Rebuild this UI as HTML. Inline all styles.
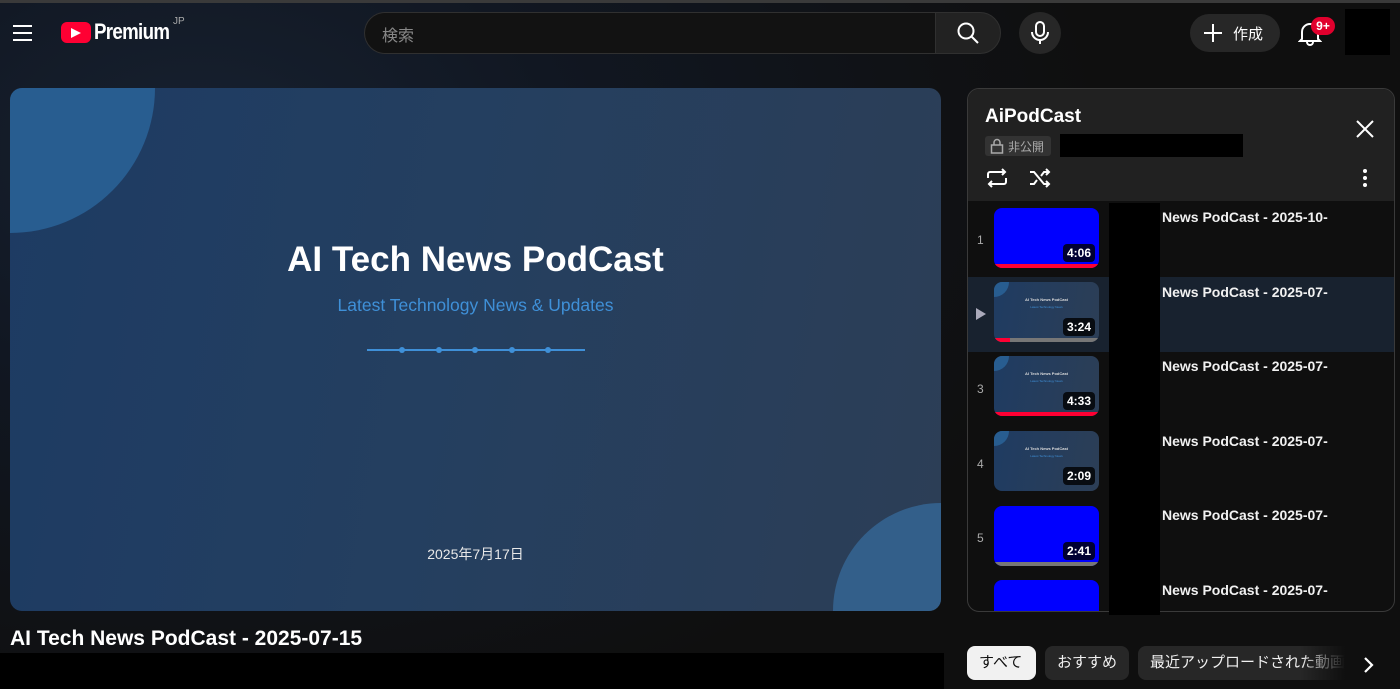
<!DOCTYPE html>
<html><head><meta charset="utf-8"><style>
*{margin:0;padding:0;box-sizing:border-box}
body{width:1400px;height:689px;overflow:hidden;background:#0f0f0f;font-family:"Liberation Sans","Noto Sans CJK JP",sans-serif;color:#fff;position:relative}
.bg{position:absolute;inset:0;background:radial-gradient(ellipse 900px 600px at 200px 150px,#172130 0%,#111722 40%,#0f0f0f 100%)}
.topline{position:absolute;left:0;top:0;width:1400px;height:3px;background:#3a3a3a}
.abs{position:absolute}
.video{left:10px;top:88px;width:931px;height:523px;border-radius:12px;overflow:hidden;background:linear-gradient(100deg,#1d3b63 0%,#243f60 45%,#2c3e56 100%)}
.thumb{position:absolute;left:994px;width:105px;height:60px;border-radius:8px;overflow:hidden}
.blue{background:#0000ff}
.mini{background:linear-gradient(100deg,#1f3c62,#2c3e56)}
.mt{position:absolute;left:0;width:105px;top:15px;text-align:center;font-size:4px;font-weight:bold;color:#ddd}
.ms{position:absolute;left:0;width:105px;top:23px;text-align:center;font-size:3px;color:#3f90d8}
.dur{position:absolute;right:4px;bottom:6px;background:rgba(0,0,0,.8);color:#fff;font-size:12px;font-weight:bold;padding:2px 4px;border-radius:4px}
.bar{position:absolute;left:0;bottom:0;height:4px;background:#ff0033}
.rt{position:absolute;left:1162px;font-size:14px;font-weight:bold;color:#f1f1f1}
.num{position:absolute;left:977px;font-size:12px;color:#aaa}
.chip{position:absolute;top:646px;height:34px;border-radius:8px;background:#272727;font-size:15px;line-height:34px;padding:0 12px;color:#f1f1f1}
</style></head><body>
<div class="bg"></div>
<div class="topline"></div>
<svg class="abs" style="left:12px;top:24px" width="22" height="18" viewBox="0 0 22 18"><path d="M1 2h19M1 9h19M1 16h19" stroke="#fff" stroke-width="2"/></svg>
<div class="abs" style="left:61px;top:22px;width:30px;height:21px;background:#ff0033;border-radius:6px"></div>
<svg class="abs" style="left:70px;top:27px" width="12" height="12"><path d="M1 1L11 6L1 11Z" fill="#fff"/></svg>
<div class="abs" style="left:94px;top:19px;font-size:22px;font-weight:bold;letter-spacing:-0.8px;transform:scaleX(.85);transform-origin:left">Premium</div>
<div class="abs" style="left:173px;top:16px;font-size:10px;color:#aaa">JP</div>
<div class="abs" style="left:364px;top:12px;width:572px;height:42px;border:1px solid #303030;border-right:none;border-radius:21px 0 0 21px;background:#121212"></div>
<div class="abs" style="left:382px;top:22px;font-size:16px;color:#888">検索</div>
<div class="abs" style="left:935px;top:12px;width:66px;height:42px;border-radius:0 21px 21px 0;background:#222;border:1px solid #303030"></div>
<svg class="abs" style="left:956px;top:21px" width="24" height="24" viewBox="0 0 24 24"><circle cx="10" cy="10" r="7.5" fill="none" stroke="#fff" stroke-width="2"/><path d="M15.5 15.5L22 22" stroke="#fff" stroke-width="2"/></svg>
<div class="abs" style="left:1019px;top:12px;width:42px;height:42px;border-radius:50%;background:#272727"></div>
<svg class="abs" style="left:1030px;top:21px" width="20" height="24" viewBox="0 0 20 24"><rect x="6" y="1" width="8" height="14" rx="4" fill="none" stroke="#fff" stroke-width="2"/><path d="M2 11a8 8 0 0016 0M10 19v4" fill="none" stroke="#fff" stroke-width="2"/></svg>
<div class="abs" style="left:1190px;top:14px;width:90px;height:38px;border-radius:19px;background:#272727"></div>
<svg class="abs" style="left:1203px;top:23px" width="20" height="20"><path d="M10 1v18M1 10h18" stroke="#fff" stroke-width="2"/></svg>
<div class="abs" style="left:1233px;top:23px;font-size:15px">作成</div>
<svg class="abs" style="left:1298px;top:20px" width="24" height="26" viewBox="0 0 24 26"><path d="M4 19V12a8 8 0 0116 0v7l2 2H2z" fill="none" stroke="#fff" stroke-width="2"/><path d="M9 22a3 3 0 006 0" fill="none" stroke="#fff" stroke-width="2"/></svg>
<div class="abs" style="left:1311px;top:17px;width:24px;height:18px;border-radius:9px;background:#e1002d;font-size:12px;font-weight:bold;text-align:center;line-height:18px">9+</div>
<div class="abs" style="left:1345px;top:9px;width:45px;height:46px;background:#000"></div>
<div class="abs video">
<div class="abs" style="left:-145px;top:-145px;width:290px;height:290px;border-radius:50%;background:#285d90"></div>
<div class="abs" style="left:823px;top:415px;width:216px;height:216px;border-radius:50%;background:#335f8a"></div>
<div class="abs" style="left:0;width:931px;top:152px;text-align:center;font-size:35px;font-weight:bold">AI Tech News PodCast</div>
<div class="abs" style="left:0;width:931px;top:207px;text-align:center;font-size:17.5px;color:#3f90d8">Latest Technology News &amp; Updates</div>
<div class="abs" style="left:357px;top:261px;width:218px;height:2px;background:#3f90d8"></div>
<div class="abs" style="left:389px;top:259px;width:6px;height:6px;border-radius:50%;background:#3f90d8"></div>
<div class="abs" style="left:426px;top:259px;width:6px;height:6px;border-radius:50%;background:#3f90d8"></div>
<div class="abs" style="left:462px;top:259px;width:6px;height:6px;border-radius:50%;background:#3f90d8"></div>
<div class="abs" style="left:499px;top:259px;width:6px;height:6px;border-radius:50%;background:#3f90d8"></div>
<div class="abs" style="left:535px;top:259px;width:6px;height:6px;border-radius:50%;background:#3f90d8"></div>
<div class="abs" style="left:0;width:931px;top:456px;text-align:center;font-size:14px;color:#e8e8e8">2025年7月17日</div>
</div>
<div class="abs" style="left:10px;top:627px;font-size:21px;font-weight:bold">AI Tech News PodCast - 2025-07-15</div>
<div class="abs" style="left:0;top:653px;width:944px;height:36px;background:#000"></div>
<div class="abs" style="left:967px;top:88px;width:428px;height:524px;border:1px solid #3a3a3a;border-radius:12px;overflow:hidden;background:#0f0f0f">
<div class="abs" style="left:0;top:0;width:428px;height:112px;background:#212121"></div>
<div class="abs" style="left:0;top:188px;width:428px;height:75px;background:#18222f"></div>
</div>
<div class="abs" style="left:985px;top:106px;font-size:19px;font-weight:bold">AiPodCast</div>
<div class="abs" style="left:985px;top:136px;width:66px;height:20px;background:#333;border-radius:3px"></div>
<svg class="abs" style="left:990px;top:138px" width="14" height="16" viewBox="0 0 14 16"><rect x="1.5" y="7" width="11" height="8" fill="none" stroke="#aaa" stroke-width="1.5"/><path d="M4 7V4.5a3 3 0 016 0V7" fill="none" stroke="#aaa" stroke-width="1.5"/></svg>
<div class="abs" style="left:1008px;top:138px;font-size:12px;color:#aaa">非公開</div>
<div class="abs" style="left:1060px;top:134px;width:183px;height:23px;background:#000"></div>
<svg class="abs" style="left:1355px;top:119px" width="20" height="20"><path d="M2 2l16 16M18 2L2 18" stroke="#fff" stroke-width="2"/></svg>
<svg class="abs" style="left:985px;top:166px" width="24" height="24" viewBox="0 0 24 24" fill="none" stroke="#fff" stroke-width="2"><path d="M3 12V8a2 2 0 012-2h15M17 3l3 3-3 3M21 12v4a2 2 0 01-2 2H4M7 21l-3-3 3-3"/></svg>
<svg class="abs" style="left:1028px;top:166px" width="24" height="24" viewBox="0 0 24 24" fill="none" stroke="#fff" stroke-width="2"><path d="M2 6h4l10 12h5M2 18h4l3-4M13 10l3-4h5M18 3l3 3-3 3M18 15l3 3-3 3"/></svg>
<svg class="abs" style="left:1362px;top:168px" width="6" height="20"><circle cx="3" cy="3" r="2" fill="#fff"/><circle cx="3" cy="10" r="2" fill="#fff"/><circle cx="3" cy="17" r="2" fill="#fff"/></svg>
<div class="num" style="top:233px">1</div>
<div class="thumb blue" style="top:208px"><div class="bar" style="width:105px"></div><div class="dur">4:06</div></div>
<svg class="abs" style="left:976px;top:308px" width="10" height="12"><path d="M0 0L10 6L0 12Z" fill="#aab"/></svg>
<div class="thumb mini" style="top:282px"><div class="abs" style="left:-15px;top:-15px;width:30px;height:30px;border-radius:50%;background:#285d90"></div><div class="mt">AI Tech News PodCast</div><div class="ms">Latest Technology News</div><div class="bar" style="width:105px;background:#777"></div><div class="bar" style="width:16px"></div><div class="dur">3:24</div></div>
<div class="num" style="top:382px">3</div>
<div class="thumb mini" style="top:356px"><div class="abs" style="left:-15px;top:-15px;width:30px;height:30px;border-radius:50%;background:#285d90"></div><div class="mt">AI Tech News PodCast</div><div class="ms">Latest Technology News</div><div class="bar" style="width:105px"></div><div class="dur">4:33</div></div>
<div class="num" style="top:457px">4</div>
<div class="thumb mini" style="top:431px"><div class="abs" style="left:-15px;top:-15px;width:30px;height:30px;border-radius:50%;background:#285d90"></div><div class="mt">AI Tech News PodCast</div><div class="ms">Latest Technology News</div><div class="dur">2:09</div></div>
<div class="num" style="top:531px">5</div>
<div class="thumb blue" style="top:506px"><div class="bar" style="width:105px;background:#777"></div><div class="dur">2:41</div></div>
<div class="abs" style="left:994px;top:580px;width:105px;height:31px;background:#0000ff;border-radius:8px 8px 0 0"></div>
<div class="abs" style="left:1109px;top:203px;width:51px;height:412px;background:#000"></div>
<div class="rt" style="top:209px">News PodCast - 2025-10-</div>
<div class="rt" style="top:284px">News PodCast - 2025-07-</div>
<div class="rt" style="top:358px">News PodCast - 2025-07-</div>
<div class="rt" style="top:433px">News PodCast - 2025-07-</div>
<div class="rt" style="top:507px">News PodCast - 2025-07-</div>
<div class="rt" style="top:582px">News PodCast - 2025-07-</div>
<div class="chip" style="left:967px;width:69px;background:#f1f1f1;color:#0f0f0f">すべて</div>
<div class="chip" style="left:1045px;width:84px">おすすめ</div>
<div class="chip" style="left:1138px;width:230px;white-space:nowrap;overflow:hidden">最近アップロードされた動画</div>
<div class="abs" style="left:1300px;top:640px;width:100px;height:49px;background:linear-gradient(90deg,rgba(15,15,15,0),#0f0f0f 45%)"></div>
<svg class="abs" style="left:1363px;top:656px" width="12" height="18"><path d="M2 2l7 7-7 7" fill="none" stroke="#fff" stroke-width="2.2"/></svg>
</body></html>
